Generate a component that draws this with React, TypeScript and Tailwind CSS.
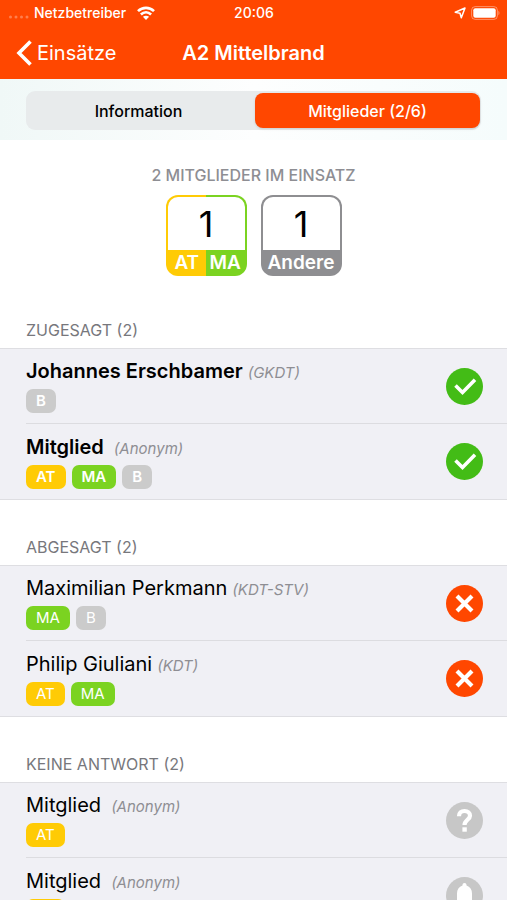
import { useState } from 'react';
import clsx from 'clsx';

type Status = 'accepted' | 'declined' | 'unknown' | 'notified';
type Tag = 'AT' | 'MA' | 'B';

interface Member {
  name: string;
  role: string;
  tags: Tag[];
  status: Status;
}

interface Group {
  title: string;
  members: Member[];
}

const groups: Group[] = [
  {
    title: 'ZUGESAGT',
    members: [
      { name: 'Johannes Erschbamer', role: 'GKDT', tags: ['B'], status: 'accepted' },
      { name: 'Mitglied', role: 'Anonym', tags: ['AT', 'MA', 'B'], status: 'accepted' },
    ],
  },
  {
    title: 'ABGESAGT',
    members: [
      { name: 'Maximilian Perkmann', role: 'KDT-STV', tags: ['MA', 'B'], status: 'declined' },
      { name: 'Philip Giuliani', role: 'KDT', tags: ['AT', 'MA'], status: 'declined' },
    ],
  },
  {
    title: 'KEINE ANTWORT',
    members: [
      { name: 'Mitglied', role: 'Anonym', tags: ['AT'], status: 'unknown' },
      { name: 'Mitglied', role: 'Anonym', tags: ['AT'], status: 'notified' },
    ],
  },
];

const tagColors: Record<Tag, string> = {
  AT: 'bg-[#ffcb05]',
  MA: 'bg-[#7bd321]',
  B: 'bg-[#cbcbcb]',
};

function StatusIcon({ status }: { status: Status }) {
  return (
    <svg viewBox="0 0 37 37" className="size-[37px] shrink-0" fill="none" stroke="#fff">
      {status === 'accepted' && (
        <>
          <circle cx="18.5" cy="18.5" r="18.5" fill="#43bc16" stroke="none" />
          <path d="M9.5 17.5l7 7L29 11.7" strokeWidth="3.6" />
        </>
      )}
      {status === 'declined' && (
        <>
          <circle cx="18.5" cy="18.5" r="18.5" fill="#ff4700" stroke="none" />
          <path d="M11 11l15 15M26 11L11 26" strokeWidth="4.2" />
        </>
      )}
      {status === 'unknown' && (
        <>
          <circle cx="18.5" cy="18.5" r="18.5" fill="#c7c7c7" stroke="none" />
          <path d="M13 14.2c0-3.3 2.2-5.2 5.5-5.2s5.5 1.8 5.5 4.7c0 4-5.5 4.3-5.5 9.3" strokeWidth="4.2" />
          <path d="M16.4 25.3h4.4v4.4h-4.4z" fill="#fff" stroke="none" />
        </>
      )}
      {status === 'notified' && (
        <>
          <circle cx="18.5" cy="18.5" r="18.5" fill="#c7c7c7" stroke="none" />
          <path
            d="M18.5 6c1.200 0 2 .9 2 2v.6c3.600 1.200 5.500 4 5.500 7.900v7l2.500 2.600v1.300h-20v-1.300l2.500-2.600v-7c0-3.900 1.900-6.700 5.500-7.900V8c0-1.100.8-2 2-2zM16 29h5c0 1.400-1.100 2.400-2.500 2.400S16 30.400 16 29z"
            fill="#fff"
            stroke="none"
          />
        </>
      )}
    </svg>
  );
}

function StatusBar() {
  return (
    <div className="grid h-[26px] grid-cols-[1fr_auto_1fr] items-center pr-[7px] pl-2 text-sm font-medium">
      <div className="flex items-center gap-1">
        <svg viewBox="0 0 22 4" className="mt-2 h-1 w-[22px]" fill="#fff" opacity="0.3">
          <circle cx="2.5" cy="2" r="1.5" />
          <circle cx="8" cy="2" r="1.5" />
          <circle cx="13.5" cy="2" r="1.5" />
          <circle cx="19" cy="2" r="1.5" />
        </svg>
        <span>Netzbetreiber</span>
        <svg viewBox="0 0 18 14" className="ml-[7px] h-[14px] w-[18px]" fill="none" stroke="#fff" strokeWidth="2.6">
          <path d="M1 5.2C5.5 .7 12.5 .7 17 5.2" />
          <path d="M3.9 8.5c3-2.9 7.2-2.9 10.2 0" />
          <path d="M9 14l-3.100-3.200c1.700-1.500 4.500-1.500 6.200 0z" fill="#fff" stroke="none" />
        </svg>
      </div>
      <span>20:06</span>
      <div className="flex items-center justify-end gap-[5px]">
        <svg viewBox="0 0 12 12" className="size-3" fill="none" stroke="#fff" strokeWidth="1.5" strokeLinejoin="round">
          <path d="M11 1L7.300 10.700 6 6.200 1.200 5.200z" />
        </svg>
        <svg viewBox="0 0 29 14" className="h-[14px] w-[29px]">
          <rect x=".6" y=".6" width="25.8" height="12.8" rx="3.6" fill="none" stroke="#fff" strokeOpacity=".4" />
          <rect x="2.3" y="2.3" width="22.4" height="9.4" rx="2" fill="#fff" />
          <path d="M27.4 4.800c1.500.7 1.500 3.700 0 4.400z" fill="#fff" fillOpacity=".4" />
        </svg>
      </div>
    </div>
  );
}

function MemberRow({ member }: { member: Member }) {
  const accepted = member.status === 'accepted';
  return (
    <li className="flex min-h-[75px] items-center justify-between pr-6">
      <div className="flex flex-col gap-1">
        <div className={clsx('flex items-baseline text-xl leading-6 text-black', accepted && 'font-semibold')}>
          <span>{member.name}</span>
          <span
            className={clsx(
              'text-[15px] leading-6 font-normal text-[#8e8e93] italic',
              member.role === 'Anonym' ? 'ml-[10px]' : 'ml-[5px]',
            )}
          >
            ({member.role})
          </span>
        </div>
        <div className="flex gap-[6px]">
          {member.tags.map((tag) => (
            <span
              key={tag}
              className={clsx(
                'h-6 rounded-[7px] px-[10px] text-[15px] leading-6 text-white',
                accepted && 'font-semibold',
                tagColors[tag],
              )}
            >
              {tag}
            </span>
          ))}
        </div>
      </div>
      <StatusIcon status={member.status} />
    </li>
  );
}

export default function App() {
  const [tab, setTab] = useState<'info' | 'members'>('members');

  return (
    <div className="flex h-screen flex-col bg-white font-['Inter','Liberation_Sans',sans-serif]">
      {/* Header */}
      <header className="shrink-0 bg-[#ff4700] text-white">
        <StatusBar />
        <nav className="grid h-[53px] grid-cols-[1fr_auto_1fr] items-center px-4 text-xl">
          <a href="#einsaetze" className="flex items-center gap-[5px]">
            <svg viewBox="0 0 16 26" className="h-[26px] w-4" fill="none" stroke="#fff" strokeWidth="3.6">
              <path d="M14.5 1.5L3 13l11.5 11.5" />
            </svg>
            Einsätze
          </a>
          <h1 className="font-semibold">A2 Mittelbrand</h1>
        </nav>
      </header>

      <div className="shrink-0 bg-linear-to-r from-[#f0f8f7] via-[#fdfefe] to-[#f5fcfc] px-[26px] pt-3 pb-[10px]">
        <div className="grid grid-cols-2 gap-1 rounded-[9px] bg-[#e8ebec] py-[2px] pr-px">
          <button
            onClick={() => setTab('info')}
            className={clsx(
              'h-[35px] rounded-lg text-base font-medium',
              tab === 'info' ? 'bg-[#ff4700] text-white shadow' : 'text-black',
            )}
          >
            Information
          </button>
          <button
            onClick={() => setTab('members')}
            className={clsx(
              'h-[35px] rounded-lg text-base font-medium',
              tab === 'members' ? 'bg-[#ff4700] text-white shadow' : 'text-black',
            )}
          >
            Mitglieder (2/6)
          </button>
        </div>
      </div>

      {/* Main Content */}
      <main className="min-h-0 flex-1 overflow-y-auto [scrollbar-width:none]">
        <section className="flex flex-col items-center gap-2 pt-[23px] pb-[7px]">
          <h2 className="text-base leading-6 font-medium text-[#8e8e93]">2 MITGLIEDER IM EINSATZ</h2>
          <div className="flex gap-[14px]">
            <div className="flex size-[81px] flex-col overflow-hidden rounded-xl bg-linear-to-r from-[#ffcb05] from-50% to-[#7bd321] to-50% p-[2px] pb-0">
              <div className="flex flex-1 items-center justify-center rounded-t-[10px] bg-white text-4xl">1</div>
              <div className="grid h-[26px] grid-cols-2 text-center text-[19px] leading-[26px] font-semibold text-white">
                <span>AT</span>
                <span>MA</span>
              </div>
            </div>
            <div className="flex size-[81px] flex-col overflow-hidden rounded-xl bg-[#8e8e91] p-[2px] pb-0">
              <div className="flex flex-1 items-center justify-center rounded-t-[10px] bg-white text-4xl">1</div>
              <div className="h-[26px] text-center text-[19px] leading-[26px] font-semibold text-white">Andere</div>
            </div>
          </div>
        </section>

        {groups.map((group) => (
          <section key={group.title}>
            <h3 className="px-[26px] pt-[35px] pb-[6px] text-base leading-6 text-[#77777c]">
              {group.title} ({group.members.length})
            </h3>
            <ul className="divide-y divide-[#dcdce0] border-y border-[#dedee2] bg-[#f0f0f5] pl-[26px]">
              {group.members.map((member, i) => (
                <MemberRow key={i} member={member} />
              ))}
            </ul>
          </section>
        ))}
      </main>
    </div>
  );
}
